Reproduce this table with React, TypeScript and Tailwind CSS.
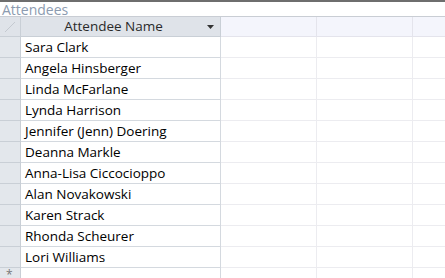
const names = [
  "Sara Clark",
  "Angela Hinsberger",
  "Linda McFarlane",
  "Lynda Harrison",
  "Jennifer (Jenn) Doering",
  "Deanna Markle",
  "Anna-Lisa Ciccocioppo",
  "Alan Novakowski",
  "Karen Strack",
  "Rhonda Scheurer",
  "Lori Williams",
];

const font = { fontFamily: '"Open Sans", "Noto Sans", sans-serif' };

function Row({ name, first }: { name: string; first?: boolean }) {
  return (
    <div className="flex h-[21px] shrink-0">
      <div className="w-[21px] shrink-0 border-r border-b border-[#c9cfd6] bg-[#e3e7ec]" />
      <div
        className={`w-[200px] shrink-0 border-r border-b border-[#d4d9df] bg-white pl-[4px] text-[13.5px] leading-[21px] text-black ${
          first ? "font-medium" : ""
        }`}
      >
        {name}
      </div>
      <div className="w-[96px] shrink-0 border-r border-b border-[#ececf0]" />
      <div className="w-[96px] shrink-0 border-r border-b border-[#ececf0]" />
      <div className="flex-1 border-b border-[#ececf0]" />
    </div>
  );
}

export default function App() {
  return (
    <div className="w-[445px] h-[278px] overflow-hidden bg-white flex flex-col" style={font}>
      <div className="h-[2px] shrink-0 bg-[#6e6e6e]" />
      <div className="h-[14px] shrink-0 pl-[2px] text-[14px] leading-[15px] text-[#8c9bb0] whitespace-nowrap">
        Attendees
      </div>
      <div className="flex h-[21px] shrink-0 border-t border-[#c9cdd4]">
        <div className="w-[21px] shrink-0 border-r border-b border-[#c9cfd6] bg-[#dfe3e9] relative">
          <svg className="absolute left-[4px] top-[4px]" width="12" height="12" viewBox="0 0 12 12">
            <path d="M1 11 L11 1" stroke="#c4c9d0" strokeWidth="1" />
          </svg>
        </div>
        <div className="w-[200px] shrink-0 border-r border-b border-[#c9cfd6] bg-[#dfe3e9] flex items-center relative pr-[14px]">
          <span className="flex-1 text-center text-[13.5px] leading-[19px] text-[#2a2a2a]">Attendee Name</span>
          <svg className="absolute right-[6px] top-[8px]" width="7" height="4" viewBox="0 0 7 4">
            <path d="M0 0 H7 L3.5 4 Z" fill="#333" />
          </svg>
        </div>
        <div className="w-[96px] shrink-0 border-r border-b border-[#e4e4ec] bg-[#f4f5fc]" />
        <div className="w-[96px] shrink-0 border-r border-b border-[#e4e4ec] bg-[#f4f5fc]" />
        <div className="flex-1 border-b border-[#e4e4ec] bg-[#f4f5fc]" />
      </div>
      {names.map((n, i) => (
        <Row key={n} name={n} first={i === 0} />
      ))}
      <div className="flex h-[10px] shrink-0">
        <div className="w-[21px] shrink-0 border-r border-[#c9cfd6] bg-[#e3e7ec] text-[12px] leading-[10px] text-[#777] pl-[6px] pt-[2px]">
          *
        </div>
        <div className="w-[200px] shrink-0 border-r border-[#d4d9df] bg-white" />
        <div className="w-[96px] shrink-0 border-r border-[#ececf0]" />
        <div className="w-[96px] shrink-0 border-r border-[#ececf0]" />
      </div>
    </div>
  );
}
